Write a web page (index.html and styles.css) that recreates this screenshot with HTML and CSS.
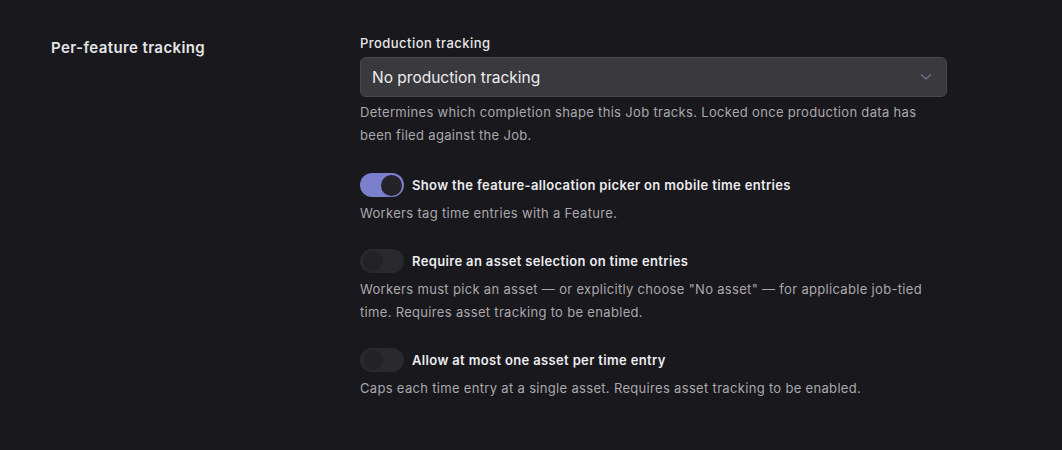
FILE: index.html
```html
<!DOCTYPE html>
<html lang="en">
<head>
<meta charset="utf-8">
<title>Per-feature tracking</title>
<link rel="stylesheet" href="styles.css">
</head>
<body>
<section class="settings-row">
  <h2 class="row-title">Per-feature tracking</h2>
  <div class="row-body">
    <div class="field">
      <label class="field-label" for="prod">Production tracking</label>
      <div class="select">
        <span class="select-value">No production tracking</span>
        <svg class="chevron" width="12" height="8" viewBox="0 0 12 8" aria-hidden="true"><path d="M1.5 1.8 L6 6 L10.5 1.8" fill="none" stroke="currentColor" stroke-width="1.4" stroke-linecap="round" stroke-linejoin="round"/></svg>
      </div>
      <p class="help">Determines which completion shape this Job tracks. Locked once production data has been filed against the Job.</p>
    </div>

    <div class="toggle-item first">
      <div class="toggle-line">
        <span class="switch on"><span class="knob"></span></span>
        <span class="toggle-label">Show the feature-allocation picker on mobile time entries</span>
      </div>
      <p class="help">Workers tag time entries with a Feature.</p>
    </div>

    <div class="toggle-item">
      <div class="toggle-line">
        <span class="switch"><span class="knob"></span></span>
        <span class="toggle-label">Require an asset selection on time entries</span>
      </div>
      <p class="help">Workers must pick an asset — or explicitly choose "No asset" — for applicable job-tied time. Requires asset tracking to be enabled.</p>
    </div>

    <div class="toggle-item">
      <div class="toggle-line">
        <span class="switch"><span class="knob"></span></span>
        <span class="toggle-label">Allow at most one asset per time entry</span>
      </div>
      <p class="help">Caps each time entry at a single asset. Requires asset tracking to be enabled.</p>
    </div>
  </div>
</section>
</body>
</html>
```

FILE: styles.css
```css
html, body {
  margin: 0;
  padding: 0;
  background: #19181c;
  font-family: Inter, "Noto Sans", "Liberation Sans", sans-serif;
  color: #ececee;
}

.settings-row {
  display: flex;
  padding: 37px 0 0 51px;
}

.row-title {
  width: 309px;
  flex: none;
  margin: 0;
  font-size: 15px;
  line-height: 22px;
  font-weight: 600;
  letter-spacing: 0.4px;
  color: #e4e4e7;
}

.row-body {
  width: 587px;
  display: flex;
  flex-direction: column;
  gap: 24px;
}

.field-label {
  display: block;
  font-size: 13px;
  line-height: 18px;
  font-weight: 500;
  letter-spacing: 0.45px;
  color: #e6e6e9;
  margin: -3px 0 5px;
}

.select {
  height: 38px;
  border: 1px solid #4a4950;
  border-radius: 6px;
  background: #3a393e;
  display: flex;
  align-items: center;
  justify-content: space-between;
  padding: 0 14px 0 11px;
}

.select-value {
  font-size: 15.5px;
  color: #ededf0;
}

.chevron {
  color: #6f6e8c;
}

.help {
  margin: 4px 0 0;
  font-size: 13px;
  line-height: 23px;
  letter-spacing: 0.32px;
  color: #a9a8ae;
}

.toggle-item .help {
  margin-top: 5px;
}

.toggle-item.first {
  margin-top: 2px;
}

.toggle-line {
  display: flex;
  align-items: center;
  gap: 8px;
}

.switch {
  width: 44px;
  height: 24px;
  border-radius: 12px;
  background: #2a292e;
  display: flex;
  align-items: center;
  padding: 0 3px;
  box-sizing: border-box;
  flex: none;
}

.switch .knob {
  width: 20px;
  height: 20px;
  border-radius: 50%;
  background: #232226;
}

.switch.on {
  background: #7b7fcd;
  justify-content: flex-end;
  padding: 0 2px;
}

.switch.on .knob {
  width: 21px;
  height: 21px;
  background: #242327;
}

.toggle-label {
  font-size: 13px;
  font-weight: 600;
  letter-spacing: 0.35px;
  color: #ececef;
}
```
